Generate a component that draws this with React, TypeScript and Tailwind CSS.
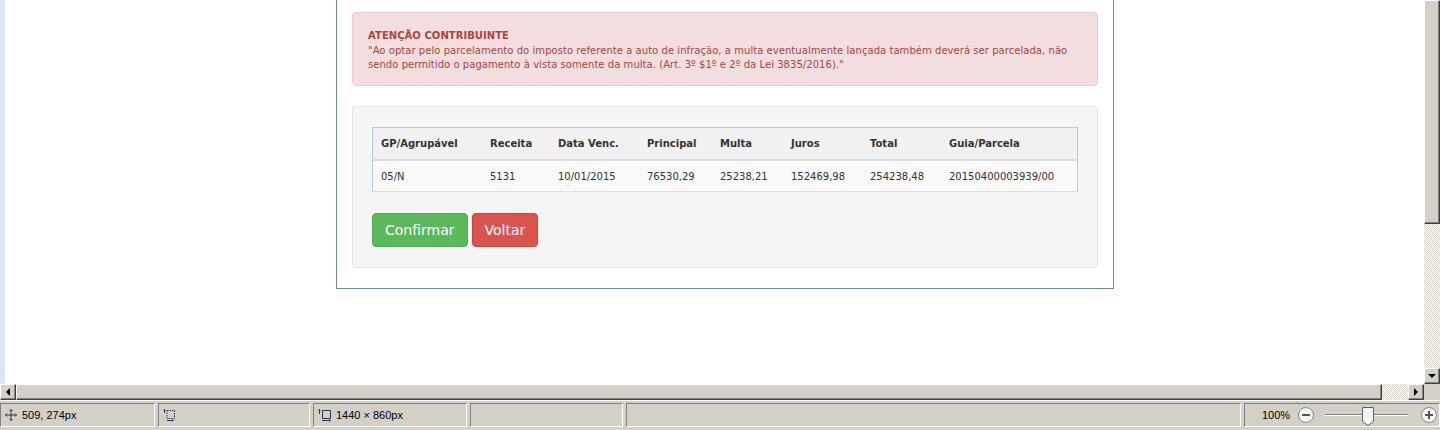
import React from "react";

const cols = [
  { label: "GP/Agrupável", w: "w-[109px]", v: "05/N" },
  { label: "Receita", w: "w-[68px]", v: "5131" },
  { label: "Data Venc.", w: "w-[89px]", v: "10/01/2015" },
  { label: "Principal", w: "w-[73px]", v: "76530,29" },
  { label: "Multa", w: "w-[71px]", v: "25238,21" },
  { label: "Juros", w: "w-[79px]", v: "152469,98" },
  { label: "Total", w: "w-[79px]", v: "254238,48" },
  { label: "Guia/Parcela", w: "flex-1", v: "20150400003939/00" },
];

const raised =
  "bg-[#d4d0c8] border border-t-white border-l-white border-b-[#404040] border-r-[#404040] shadow-[inset_-1px_-1px_0_#808080]";
const checker =
  "bg-[repeating-conic-gradient(#ffffff_0_25%,#d4d0c8_0_50%)] bg-[length:2px_2px]";
const sunken =
  "h-[24px] border border-t-[#808080] border-l-[#808080] border-b-white border-r-white flex items-center";

function Arrow({ dir }: { dir: "left" | "right" | "down" }) {
  const pts =
    dir === "left" ? "6,0 6,8 2,4" : dir === "right" ? "2,0 2,8 6,4" : "0,2 8,2 4,6";
  return (
    <svg width="8" height="8" viewBox="0 0 8 8">
      <polygon points={pts} fill="#000" />
    </svg>
  );
}

function Page() {
  return (
    <div
      className="ml-[331px] w-[778px] border-x border-b border-[#6d86c0] px-[15px] pt-[12px] pb-[20px] text-[10px] leading-[14px]"
      style={{ fontFamily: "'DejaVu Sans', Verdana, sans-serif" }}
    >
      <div className="bg-[#f2dede] border border-[#ebccd1] rounded-[4px] text-[#a94442] pt-[16px] pb-[13px] px-[15px] tracking-[0.05px]">
        <div className="font-bold mb-[1px]">ATENÇÃO CONTRIBUINTE</div>
        <div>
          "Ao optar pelo parcelamento do imposto referente a auto de infração, a multa eventualmente lançada também deverá ser parcelada, não
          sendo permitido o pagamento à vista somente da multa. (Art. 3º $1º e 2º da Lei 3835/2016)."
        </div>
      </div>

      <div className="mt-[20px] bg-[#f5f5f5] border border-[#e3e3e3] rounded-[4px] py-[20px] px-[19px]">
        <div className="border-x border-t border-[#a6cdf2] text-[#333]">
          <div className="flex h-[33px] items-center pt-[1px] bg-[#f1f1f1] border-b-2 border-[#dddddd] font-bold">
            {cols.map((c) => (
              <div key={c.label} className={`${c.w} pl-[8px]`}>{c.label}</div>
            ))}
          </div>
          <div className="flex h-[31px] items-center pt-[1px] bg-[#f9f9f9] border-b border-[#dddddd]">
            {cols.map((c) => (
              <div key={c.label} className={`${c.w} pl-[8px]`}>{c.v}</div>
            ))}
          </div>
        </div>

        <div className="mt-[21px] flex gap-[4px] text-[14px] text-white">
          <button className="h-[34px] px-[12px] rounded-[4px] bg-[#5cb85c] border border-[#4cae4c]">Confirmar</button>
          <button className="h-[34px] px-[12px] rounded-[4px] bg-[#d9534f] border border-[#d43f3a]">Voltar</button>
        </div>
      </div>
    </div>
  );
}

export default function App() {
  return (
    <div
      className="w-[1440px] h-[430px] overflow-hidden bg-[#d4d0c8] flex flex-col text-[11px] text-black"
      style={{ fontFamily: "'Liberation Sans', Tahoma, sans-serif" }}
    >
      {/* viewport */}
      <div className="flex h-[384px]">
        <div className="w-[5px] bg-[#dce6f2]" />
        <div className="flex-1 bg-white overflow-hidden">
          <Page />
        </div>
        <div className="w-[16px] flex flex-col">
          <div className={`h-[224px] ${raised}`} />
          <div className={`flex-1 ${checker}`} />
          <div className={`h-[16px] ${raised} flex items-center justify-center`}>
            <Arrow dir="down" />
          </div>
        </div>
      </div>

      {/* horizontal scrollbar */}
      <div className="flex h-[16px]">
        <div className={`w-[16px] ${raised} flex items-center justify-center`}>
          <Arrow dir="left" />
        </div>
        <div className={`w-[1366px] ${raised}`} />
        <div className={`w-[26px] ${checker}`} />
        <div className={`w-[16px] ${raised} flex items-center justify-center`}>
          <Arrow dir="right" />
        </div>
        <div className="flex-1" />
      </div>

      {/* status bar */}
      <div className="flex-1 flex items-start pt-[2px] gap-[3px] border-t border-white">
        <div className={`${sunken} w-[155px] pl-[4px] gap-[5px]`}>
          <svg width="12" height="12" viewBox="0 0 12 12" fill="none" stroke="#2a3550" strokeWidth="1">
            <path d="M6 0.5V11.5M0.5 6H11.5" />
            <path d="M4.5 2L6 0.5L7.5 2M4.5 10L6 11.5L7.5 10M2 4.5L0.5 6L2 7.5M10 4.5L11.5 6L10 7.5" />
          </svg>
          <span>509, 274px</span>
        </div>
        <div className={`${sunken} w-[152px] pl-[4px]`}>
          <svg width="13" height="12" viewBox="0 0 13 12" fill="none" stroke="#2a3550" strokeWidth="1">
            <path d="M1.5 4V0.5M0.5 1.5L1.5 0.5L2.5 1.5" />
            <path d="M4 1.5H11.5V9.5H4Z" strokeDasharray="1.5 1" />
            <path d="M4 11.5H10.5M9.5 10.5L10.5 11.5L9.5 12.5" />
          </svg>
        </div>
        <div className={`${sunken} w-[154px] pl-[4px] gap-[4px]`}>
          <svg width="14" height="13" viewBox="0 0 14 13" fill="none" stroke="#2a3550" strokeWidth="1">
            <path d="M1.5 5V0.5M0.5 1.5L1.5 0.5L2.5 1.5" />
            <path d="M4.5 1.5H12.5V9.5H4.5Z" />
            <path d="M4 11.5H12.5M11.5 10.5L12.5 11.5L11.5 12.5" />
          </svg>
          <span>1440 × 860px</span>
        </div>
        <div className={`${sunken} w-[153px]`} />
        <div className={`${sunken} w-[615px]`} />
        <div className={`${sunken} flex-1 pl-[17px]`}>
          <span>100%</span>
          <svg className="ml-[7px]" width="18" height="18" viewBox="0 0 18 18">
            <circle cx="9" cy="9" r="7.5" fill="#f4f4f4" stroke="#8a8a8a" />
            <rect x="5" y="8" width="8" height="2" fill="#555" />
          </svg>
          <div className="relative w-[83px] h-[18px] ml-[10px]">
            <div className="absolute left-0 right-0 top-[8px] h-[2px] border-t border-[#808080] border-b border-b-white" />
            <svg className="absolute left-[37px] top-[1px]" width="12" height="19" viewBox="0 0 12 19">
              <path d="M0.5 0.5H11.5V14.5L6 18.5L0.5 14.5Z" fill="#f4f4f4" stroke="#606060" />
            </svg>
          </div>
          <svg className="ml-[12px]" width="18" height="18" viewBox="0 0 18 18">
            <circle cx="9" cy="9" r="7.5" fill="#f4f4f4" stroke="#8a8a8a" />
            <rect x="5" y="8" width="8" height="2" fill="#555" />
            <rect x="8" y="5" width="2" height="8" fill="#555" />
          </svg>
        </div>
      </div>
    </div>
  );
}
